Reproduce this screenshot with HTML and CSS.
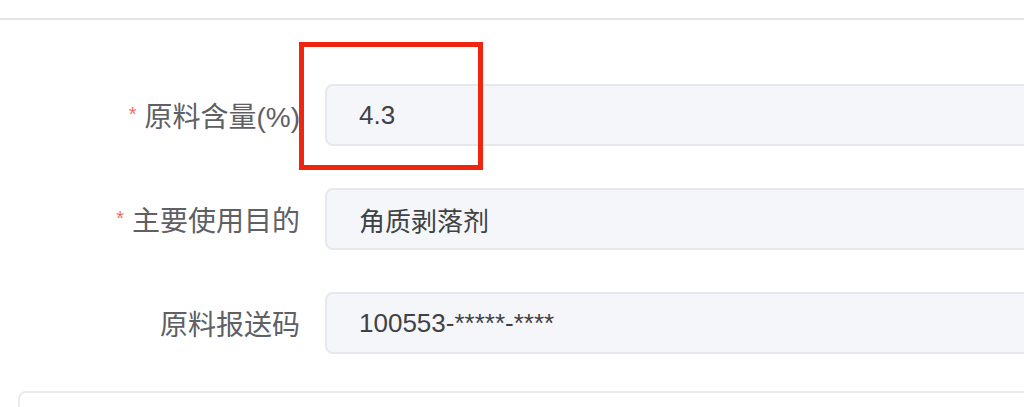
FILE: index.html
```html
<!DOCTYPE html>
<html lang="zh-CN">
<head>
  <meta charset="UTF-8" />
  <meta name="viewport" content="width=device-width, initial-scale=1.0"/>
  <title>原料信息</title>
  <link rel="stylesheet" href="styles.css">
</head>
<body>

<div class="topbar"></div>

<form class="form">
  <div class="form-row">
    <label class="form-label required" for="content">原料含量(%)</label>
    <input class="form-input" id="content" type="text" value="4.3" readonly />
  </div>

  <div class="form-row">
    <label class="form-label required" for="purpose">主要使用目的</label>
    <input class="form-input" id="purpose" type="text" value="角质剥落剂" readonly />
  </div>

  <div class="form-row">
    <label class="form-label" for="code">原料报送码</label>
    <input class="form-input" id="code" type="text" value="100553-*****-****" readonly />
  </div>

  <!-- annotation drawn over the first field -->
  <div class="mark"></div>
</form>

<div class="card"></div>

</body>
</html>
```

FILE: styles.css
```css
body {
  font-family: 'Liberation Sans', 'Noto Sans CJK SC', sans-serif;
  margin: 0;
  padding: 0;
  background: #fff;
  overflow: hidden;
}

.topbar {
  height: 18px;
  border-bottom: 2px solid #e3e3e5;
}

.form {
  position: relative;
  width: 1080px;
  padding-top: 64px;
  display: flex;
  flex-direction: column;
  gap: 42px;
}

.form-row {
  display: grid;
  grid-template-columns: 300px 1fr;
  column-gap: 25px;
  align-items: center;
  height: 62px;
}

.form-label {
  text-align: right;
  font-size: 28px;
  color: #5e6064;
  white-space: nowrap;
}

.form-label.required::before {
  content: "*";
  color: #f56c6c;
  font-size: 20px;
  margin-right: 8px;
  vertical-align: 6px;
}

.form-input {
  box-sizing: border-box;
  height: 62px;
  padding: 0 32px;
  border: 2px solid #e6e8ed;
  border-radius: 8px;
  background: #f5f6fa;
  font-family: inherit;
  font-size: 26px;
  color: #404144;
  outline: none;
}

.mark {
  position: absolute;
  left: 299px;
  top: 22px;
  width: 174px;
  height: 118px;
  border: 5px solid #f0250f;
}

.card {
  margin: 37px 0 0 18px;
  height: 40px;
  border-top: 2px solid #ebebef;
  border-left: 2px solid #ebebef;
  border-radius: 8px 0 0 0;
}
```
